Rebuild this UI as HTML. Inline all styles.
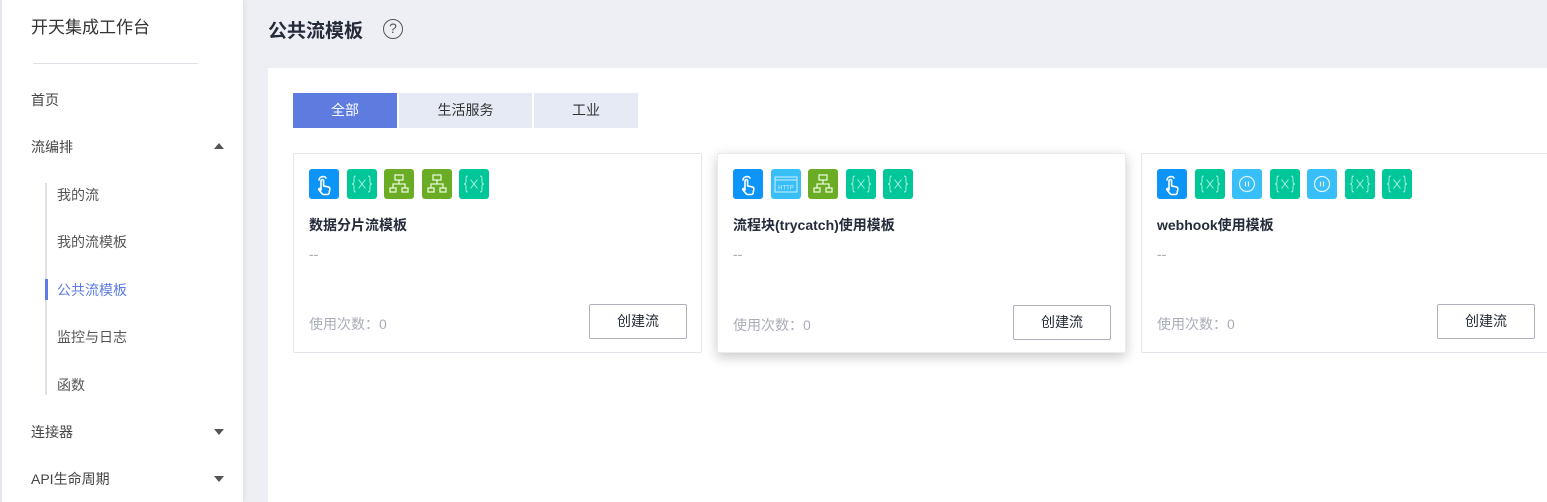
<!DOCTYPE html>
<html><head><meta charset="utf-8"><style>
*{margin:0;padding:0;box-sizing:border-box}
html,body{width:1547px;height:502px;overflow:hidden}
body{background:#eeeff4;font-family:"Liberation Sans","Noto Sans CJK SC",sans-serif;position:relative;color:#252b3a}
.side{position:absolute;left:0;top:0;width:243px;height:502px;background:#fff;border-left:2px solid #e3e5ec;box-shadow:2px 0 6px rgba(0,0,0,.06)}
.logo{position:absolute;left:29px;top:13px;font-size:17px;color:#333}
.hr{position:absolute;left:31px;top:63px;width:165px;height:1px;background:#dfe1e6}
.m{position:absolute;left:29px;font-size:14px;color:#444}
.s{position:absolute;left:55px;font-size:14px;color:#555}
.vl{position:absolute;left:43px;top:183px;width:2px;height:212px;background:#dfe1e6}
.act{position:absolute;left:43px;top:279px;width:3px;height:21px;background:#5e7ce0}
.tri{position:absolute;left:212px;width:0;height:0;border-left:5px solid transparent;border-right:5px solid transparent}
.dn{border-top:6px solid #555}.up{border-bottom:6px solid #555}
h1{position:absolute;left:268px;top:16px;font-size:19px;font-weight:bold;color:#252b3a}
.q{position:absolute;left:383px;top:19px;width:20px;height:20px;border:1.5px solid #555;border-radius:50%;font-size:14px;text-align:center;line-height:17px;color:#555}
.panel{position:absolute;left:268px;top:68px;width:1290px;height:440px;background:#fff}
.tab{position:absolute;top:93px;height:35px;line-height:35px;text-align:center;font-size:14px;background:#e6eaf5;color:#333}
.card{position:absolute;top:153px;width:409px;height:200px;background:#fff;border:1px solid #e3e5ea;border-radius:2px}
.card.sh{box-shadow:0 4px 12px rgba(0,0,0,.22);border-color:#ebebeb}
.ic{position:absolute;top:15px;width:30px;height:30px;border-radius:3px}
.ic svg{width:30px;height:30px;display:block}
.t{position:absolute;left:15px;top:61px;font-size:14px;font-weight:bold;color:#252b3a}
.d{position:absolute;left:15px;top:92px;font-size:14px;color:#aaa}
.u{position:absolute;left:15px;top:160px;font-size:14px;color:#a9adb8}
.btn{position:absolute;left:295px;top:150px;width:98px;height:35px;border:1px solid #adb0b8;border-radius:2px;text-align:center;line-height:33px;font-size:14px;color:#252b3a}
.b{background:#0c94f8}.g{background:#00c79a}.o{background:#6aad25}.c{background:#38bff7}
</style></head><body>
<svg width="0" height="0" style="position:absolute">
<symbol id="hand" viewBox="0 0 30 30"><g fill="none" stroke="#fff" stroke-width="1.6" stroke-linecap="round" stroke-linejoin="round"><path d="M10 11a4 4 0 0 1 7-2"/><path d="M12 21v-9a1.3 1.3 0 0 1 2.6 0v5l4.4 0.8c1.3.3 2 1.2 1.8 2.5l-.6 3.4c-.2 1-1 1.8-2 1.8h-3.5c-.8 0-1.4-.4-1.8-1l-3-3.6c-.6-.8.4-1.8 1.2-1.2z"/></g></symbol>
<symbol id="var" viewBox="0 0 30 30"><g fill="none" stroke="#b5efdd" stroke-width="0.9"><path d="M9 7c-2 0-2 1-2 3v3c0 1-1 2-2 2 1 0 2 1 2 2v3c0 2 0 3 2 3"/><path d="M21 7c2 0 2 1 2 3v3c0 1 1 2 2 2-1 0-2 1-2 2v3c0 2 0 3-2 3"/><path d="M11.5 10.5l7 9M18.5 10.5l-7 9"/></g></symbol>
<symbol id="tree" viewBox="0 0 30 30"><g fill="none" stroke="#e8f6d8" stroke-width="1.3"><rect x="11" y="6" width="8" height="5"/><rect x="6" y="19" width="6" height="4"/><rect x="18" y="19" width="6" height="4"/><path d="M15 11v4M9 19v-4h12v4"/></g></symbol>
<symbol id="http" viewBox="0 0 30 30"><g fill="none" stroke="#cfeefd" stroke-width="1"><rect x="4" y="8" width="22" height="15"/><path d="M4 11h22"/></g><text x="15" y="20.5" font-size="6" fill="#cfeefd" text-anchor="middle" font-family="Liberation Sans">HTTP</text></symbol>
<symbol id="pause" viewBox="0 0 30 30"><g fill="none" stroke="#dff4fe" stroke-width="1.2"><circle cx="15" cy="15" r="7.5"/><path d="M13.5 12.5v5M16.5 12.5v5"/></g></symbol>
</svg>
<div class="side">
<div class="logo">开天集成工作台</div><div class="hr"></div>
<div class="m" style="top:90px">首页</div>
<div class="m" style="top:137px">流编排</div><div class="tri up" style="top:143px"></div>
<div class="vl"></div><div class="act"></div>
<div class="s" style="top:185px">我的流</div>
<div class="s" style="top:232px">我的流模板</div>
<div class="s" style="top:280px;color:#5e7ce0">公共流模板</div>
<div class="s" style="top:327px">监控与日志</div>
<div class="s" style="top:375px">函数</div>
<div class="m" style="top:422px">连接器</div><div class="tri dn" style="top:429px"></div>
<div class="m" style="top:469px">API生命周期</div><div class="tri dn" style="top:476px"></div>
</div>
<h1>公共流模板</h1><div class="q">?</div>
<div class="panel"></div>
<div class="tab" style="left:293px;width:104px;background:#5e7ce0;color:#fff">全部</div>
<div class="tab" style="left:399px;width:133px">生活服务</div>
<div class="tab" style="left:534px;width:104px">工业</div>

<div class="card" style="left:293px">
<div class="ic b" style="left:15px"><svg><use href="#hand"/></svg></div>
<div class="ic g" style="left:53px"><svg><use href="#var"/></svg></div>
<div class="ic o" style="left:90px"><svg><use href="#tree"/></svg></div>
<div class="ic o" style="left:128px"><svg><use href="#tree"/></svg></div>
<div class="ic g" style="left:165px"><svg><use href="#var"/></svg></div>
<div class="t">数据分片流模板</div><div class="d">--</div>
<div class="u">使用次数：0</div><div class="btn">创建流</div></div>

<div class="card sh" style="left:717px;height:200px">
<div class="ic b" style="left:15px"><svg><use href="#hand"/></svg></div>
<div class="ic c" style="left:53px"><svg><use href="#http"/></svg></div>
<div class="ic o" style="left:90px"><svg><use href="#tree"/></svg></div>
<div class="ic g" style="left:128px"><svg><use href="#var"/></svg></div>
<div class="ic g" style="left:165px"><svg><use href="#var"/></svg></div>
<div class="t">流程块(trycatch)使用模板</div><div class="d">--</div>
<div class="u" style="top:161px">使用次数：0</div><div class="btn" style="top:151px">创建流</div></div>

<div class="card" style="left:1141px;width:420px">
<div class="ic b" style="left:15px"><svg><use href="#hand"/></svg></div>
<div class="ic g" style="left:53px"><svg><use href="#var"/></svg></div>
<div class="ic c" style="left:90px"><svg><use href="#pause"/></svg></div>
<div class="ic g" style="left:128px"><svg><use href="#var"/></svg></div>
<div class="ic c" style="left:165px"><svg><use href="#pause"/></svg></div>
<div class="ic g" style="left:203px"><svg><use href="#var"/></svg></div>
<div class="ic g" style="left:240px"><svg><use href="#var"/></svg></div>
<div class="t">webhook使用模板</div><div class="d">--</div>
<div class="u">使用次数：0</div><div class="btn">创建流</div></div>
</body></html>
